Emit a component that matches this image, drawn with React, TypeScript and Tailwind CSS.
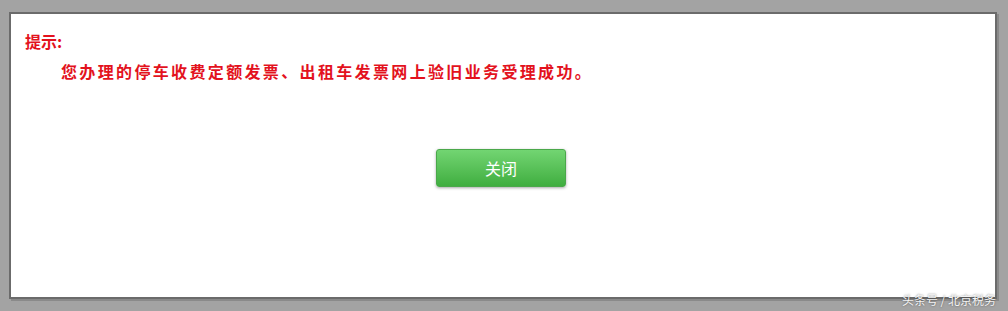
export default function App() {
  return (
    <div
      className="relative h-[311px] w-[1008px] overflow-hidden bg-[#a3a3a3] pl-[9px] pt-[12px]"
      style={{ fontFamily: '"Noto Sans CJK SC", "Liberation Sans", sans-serif' }}
    >
      <div className="flex h-[287px] w-[988px] flex-col border-2 border-[#6b6b6b] bg-white shadow-[2px_2px_0_#8a8a8a]">
        <div className="pl-[14px] pt-[17px] text-[16px] font-bold leading-[20px] text-[#e3121d]">提示:</div>
        <div className="pl-[50px] pt-[10px] text-[16px] font-bold leading-[20px] tracking-[2.35px] text-[#e3121d]">
          您办理的停车收费定额发票、出租车发票网上验旧业务受理成功。
        </div>
        <div className="flex justify-center pr-[4px] pt-[68px]">
          <button className="h-[38px] w-[130px] rounded-[3px] border border-[#4aa84a] bg-gradient-to-b from-[#72d572] to-[#3fae3f] text-[16px] text-white shadow-[0_1px_3px_rgba(0,0,0,0.35)]">
            关闭
          </button>
        </div>
      </div>
      <div className="absolute bottom-[3px] right-[12px] text-[12px] leading-[16px] text-[#f4f4f4] [text-shadow:0_0_2px_rgba(0,0,0,0.5)]">
        头条号 / 北京税务
      </div>
    </div>
  );
}
